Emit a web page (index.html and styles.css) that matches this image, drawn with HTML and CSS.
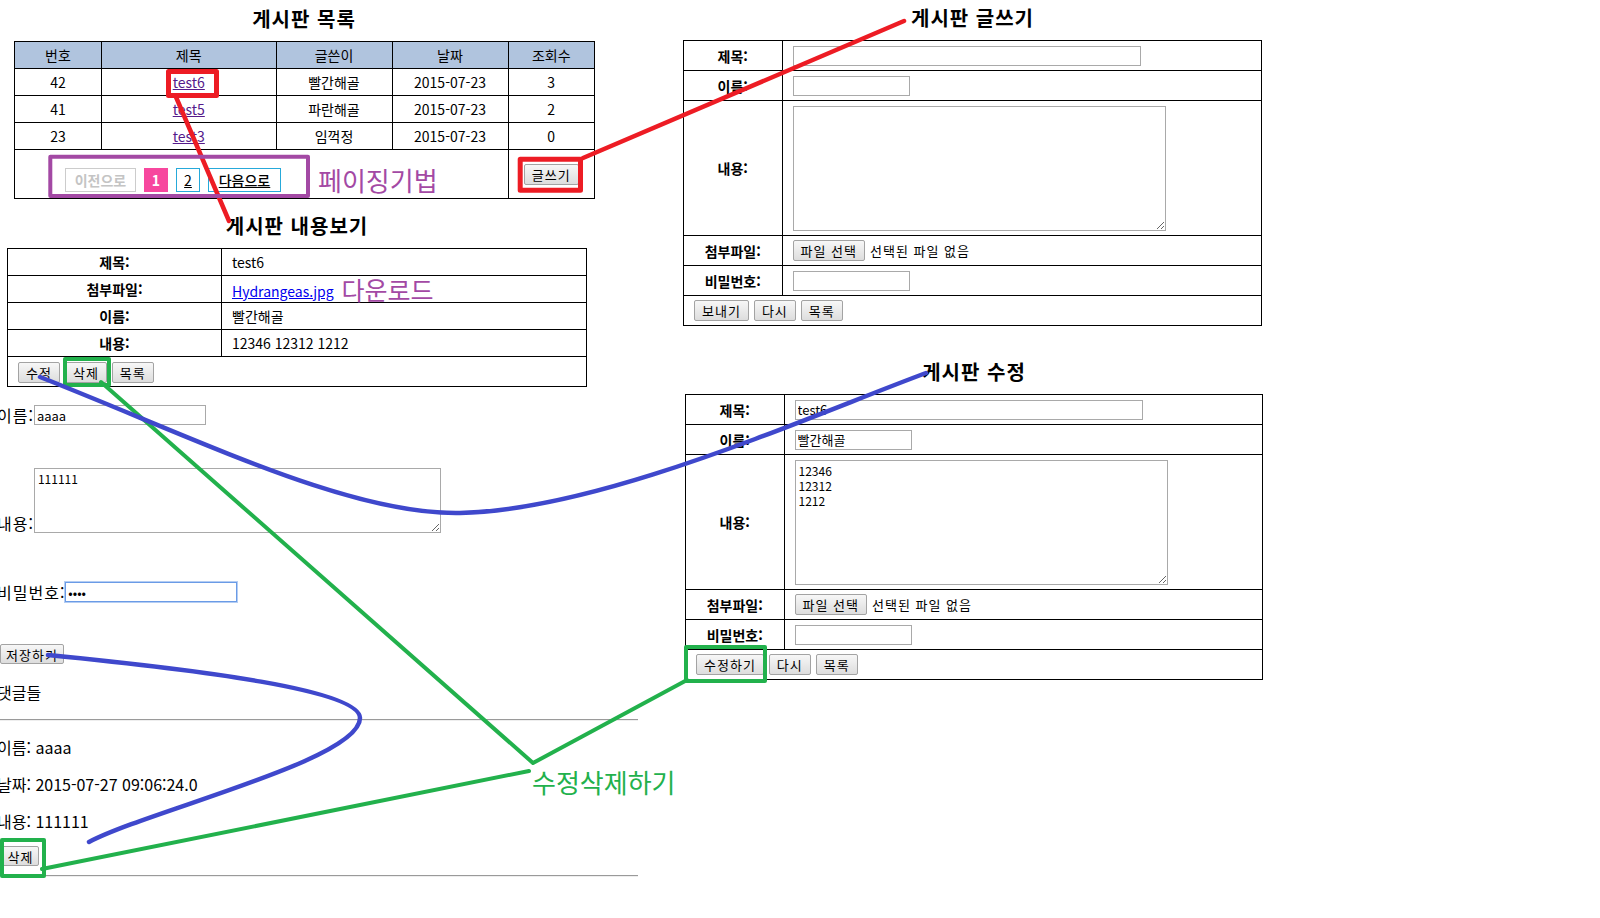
FILE: index.html
```html
<!DOCTYPE html>
<html lang="ko">
<head>
    <meta charset="UTF-8">
    <title>게시판 화면 정리</title>
    <link rel="stylesheet" href="styles.css">
</head>
<body>
<div class="canvas">

    <!-- 게시판 목록 -->
    <section class="panel panel-list">
        <h2 class="panel-title">게시판 목록</h2>
        <table class="board list">
            <colgroup>
                <col class="c-num"><col class="c-title"><col class="c-writer"><col class="c-date"><col class="c-hit">
            </colgroup>
            <tr><th>번호</th><th>제목</th><th>글쓴이</th><th>날짜</th><th>조회수</th></tr>
            <tr><td>42</td><td><a href="#" class="visited">test6</a></td><td>빨간해골</td><td>2015-07-23</td><td>3</td></tr>
            <tr><td>41</td><td><a href="#" class="visited">test5</a></td><td>파란해골</td><td>2015-07-23</td><td>2</td></tr>
            <tr><td>23</td><td><a href="#" class="visited">test3</a></td><td>임꺽정</td><td>2015-07-23</td><td>0</td></tr>
            <tr class="paging-row">
                <td colspan="4" class="paging-cell">
                    <div class="paging">
                        <span class="page-box disabled">이전으로</span>
                        <span class="page-box current">1</span>
                        <a href="#" class="page-box num">2</a>
                        <a href="#" class="page-box next">다음으로</a>
                        <span class="note note-purple">페이징기법</span>
                    </div>
                </td>
                <td class="write-cell"><button class="btn">글쓰기</button></td>
            </tr>
        </table>
    </section>

    <!-- 게시판 내용보기 -->
    <section class="panel panel-view">
        <h2 class="panel-title">게시판 내용보기</h2>
        <table class="board form view">
            <colgroup><col class="c-view-label"><col></colgroup>
            <tr><th>제목:</th><td>test6</td></tr>
            <tr><th>첨부파일:</th><td><a href="#" class="file-link">Hydrangeas.jpg</a><span class="note note-purple inline-note">다운로드</span></td></tr>
            <tr><th>이름:</th><td>빨간해골</td></tr>
            <tr><th>내용:</th><td>12346 12312 1212</td></tr>
            <tr class="btn-row"><td colspan="2">
                <div class="btns"><button class="btn">수정</button><button class="btn">삭제</button><button class="btn">목록</button></div>
            </td></tr>
        </table>
    </section>

    <!-- 게시판 글쓰기 -->
    <section class="panel panel-write">
        <h2 class="panel-title">게시판 글쓰기</h2>
        <table class="board form edit">
            <colgroup><col class="c-edit-label"><col></colgroup>
            <tr><th>제목:</th><td><input type="text" class="in in-title"></td></tr>
            <tr><th>이름:</th><td><input type="text" class="in in-short"></td></tr>
            <tr class="tall-row"><th>내용:</th><td><textarea class="ta"></textarea></td></tr>
            <tr><th>첨부파일:</th><td><div class="file"><button class="btn">파일 선택</button><span>선택된 파일 없음</span></div></td></tr>
            <tr><th>비밀번호:</th><td><input type="password" class="in in-short"></td></tr>
            <tr class="btn-row"><td colspan="2">
                <div class="btns"><button class="btn">보내기</button><button class="btn">다시</button><button class="btn">목록</button></div>
            </td></tr>
        </table>
    </section>

    <!-- 게시판 수정 -->
    <section class="panel panel-modify">
        <h2 class="panel-title">게시판 수정</h2>
        <table class="board form edit">
            <colgroup><col class="c-edit-label"><col></colgroup>
            <tr><th>제목:</th><td><input type="text" class="in in-title" value="test6"></td></tr>
            <tr><th>이름:</th><td><input type="text" class="in in-short" value="빨간해골"></td></tr>
            <tr class="tall-row"><th>내용:</th><td><textarea class="ta">12346
12312
1212</textarea></td></tr>
            <tr><th>첨부파일:</th><td><div class="file"><button class="btn">파일 선택</button><span>선택된 파일 없음</span></div></td></tr>
            <tr><th>비밀번호:</th><td><input type="password" class="in in-short"></td></tr>
            <tr class="btn-row"><td colspan="2">
                <div class="btns"><button class="btn">수정하기</button><button class="btn">다시</button><button class="btn">목록</button></div>
            </td></tr>
        </table>
    </section>

    <!-- 댓글 -->
    <section class="panel panel-comment">
        <div class="c-line"><label>이름:</label><input type="text" class="in in-comment" value="aaaa"></div>
        <div class="c-line c-area"><label>내용:</label><textarea class="ta ta-comment">111111</textarea></div>
        <div class="c-line c-pass"><label>비밀번호:</label><input type="password" class="in in-comment focus" value="1111"></div>
        <div class="c-save"><button class="btn">저장하기</button></div>
        <p class="c-title">댓글들</p>
        <hr class="c-hr">
        <p class="c-item first">이름: aaaa</p>
        <p class="c-item">날짜: 2015-07-27 09:06:24.0</p>
        <p class="c-item">내용: 111111</p>
        <div class="c-del"><button class="btn">삭제</button></div>
        <hr class="c-hr c-hr-end">
    </section>

    <span class="note note-green">수정삭제하기</span>

    <!-- 주석 선 -->
    <svg class="marks" width="1600" height="918" viewBox="0 0 1600 918">
        <g fill="none" stroke-linecap="round" stroke-linejoin="round">
            <rect x="168.5" y="71.5" width="48" height="24" stroke="#ed1c24" stroke-width="5"/>
            <path d="M176 97 L229 221" stroke="#ed1c24" stroke-width="4.5"/>
            <rect x="520.2" y="159.2" width="60.3" height="31" stroke="#ed1c24" stroke-width="5"/>
            <path d="M583 158 L904 21" stroke="#ed1c24" stroke-width="4.5"/>

            <rect x="50.3" y="156.7" width="257.7" height="39.3" stroke="#a349a4" stroke-width="4"/>

            <rect x="65" y="359" width="44" height="26" stroke="#22b14c" stroke-width="4"/>
            <rect x="686" y="647" width="79" height="34" stroke="#22b14c" stroke-width="4"/>
            <rect x="2" y="840" width="42" height="36" stroke="#22b14c" stroke-width="4"/>
            <path d="M101 382 L533 763 L687 680" stroke="#22b14c" stroke-width="4"/>
            <path d="M529 771 L42 869" stroke="#22b14c" stroke-width="4"/>

            <path d="M40 377 C200 440 350 515 460 513 C600 510 800 420 926 373" stroke="#3f48cc" stroke-width="4.5"/>
            <path d="M48 655 C200 670 360 690 360 718 C360 760 150 810 89 842" stroke="#3f48cc" stroke-width="4.5"/>
        </g>
    </svg>
</div>
</body>
</html>
```

FILE: styles.css
```css
/* 기본 */
* {
    box-sizing: border-box;
}

body {
    margin: 0;
    background: #FFFFFF;
    color: #000000;
    font-family: "Noto Sans CJK KR", "Noto Sans", sans-serif;
    overflow: hidden;
}

.canvas {
    position: relative;
    width: 1600px;
    height: 918px;
}

/* 각 화면 캡처 위치 */
.panel {
    position: absolute;
}

.panel-list { left: 14px; top: 7px; width: 580px; }
.panel-view { left: 7px; top: 214px; width: 580px; }
.panel-write { left: 683px; top: 6px; width: 579px; }
.panel-modify { left: 685px; top: 360px; width: 578px; }
.panel-comment { left: -3px; top: 405px; width: 641px; font-size: 16px; }

.panel-title {
    margin: 0 0 10px;
    text-align: center;
    font-size: 20px;
    line-height: 24px;
    letter-spacing: 1px;
    font-weight: bold;
}

/* 표 */
.board {
    width: 100%;
    border-collapse: collapse;
    table-layout: fixed;
    font-size: 14px;
    line-height: 18px;
}

.board th,
.board td {
    border: 1px solid #000000;
    padding: 0 10px;
}

.list th {
    height: 27px;
    background: #B0C4DE;
    font-weight: normal;
}

.list td {
    height: 27px;
    text-align: center;
}

.c-num { width: 87px; }
.c-title { width: 174.5px; }
.c-writer { width: 116px; }
.c-date { width: 116px; }
.c-hit { width: 86.5px; }

a.visited {
    color: #551A8B;
}

.list .paging-row td {
    height: 49px;
}

.list td.paging-cell {
    vertical-align: top;
    padding: 18px 0 0 50px;
    text-align: left;
}

.paging {
    display: flex;
    align-items: center;
    gap: 8px;
}

.page-box {
    display: inline-flex;
    align-items: center;
    justify-content: center;
    height: 24px;
    font-weight: bold;
    color: #000000;
}

.page-box.disabled {
    width: 71px;
    border: 1px solid #CCCCCC;
    color: #C4C4C4;
}

.page-box.current {
    width: 24px;
    background: #F7479E;
    color: #FFFFFF;
}

.page-box.num {
    width: 24px;
    border: 1px solid #26A9DA;
    text-decoration: underline;
    font-weight: normal;
}

.page-box.next {
    width: 73px;
    border: 1px solid #26A9DA;
    text-decoration: underline;
    font-weight: 500;
}

/* 설명 글씨 */
.note {
    font-size: 26px;
    line-height: 24px;
}

.note-purple {
    color: #A349A4;
    margin-left: 29px;
}

.inline-note {
    display: inline-block;
    margin-left: 8px;
    line-height: 14px;
    font-size: 25px;
    position: relative;
    top: 3px;
}

.note-green {
    position: absolute;
    left: 532px;
    top: 770px;
    color: #22B14C;
}

.write-cell {
    text-align: center;
}

/* 입력 폼 표 */
.form th {
    font-weight: bold;
    text-align: center;
}

.view th,
.view td {
    height: 27px;
}

.c-view-label { width: 214px; }
.c-edit-label { width: 98.5px; }

.edit th,
.edit td {
    height: 30px;
}

.edit .tall-row th,
.edit .tall-row td {
    height: 135px;
}

.form .btn-row td {
    height: 30px;
    padding: 0 10px;
}

.btns {
    display: flex;
    gap: 5px;
}

.view .btn-row td {
    padding-top: 1px;
}

.file {
    display: flex;
    align-items: center;
    gap: 5px;
    font-size: 13px;
    letter-spacing: 1px;
}

/* 입력 요소 */
.in {
    height: 20px;
    border: 1px solid #A9A9A9;
    padding: 0 2px;
    font-family: "Noto Sans CJK KR", sans-serif;
    font-size: 13px;
    vertical-align: middle;
    display: block;
}

.in-title { width: 348px; }
.in-short { width: 117px; }

.ta {
    display: block;
    width: 373px;
    height: 125px;
    border: 1px solid #A9A9A9;
    padding: 2px 3px;
    font-family: "Noto Sans CJK KR", sans-serif;
    font-size: 12px;
    line-height: 15px;
    resize: both;
}

.btn {
    height: 21px;
    padding: 0 7px;
    border: 1px solid #A3A3A3;
    border-radius: 2px;
    background: linear-gradient(#F7F7F7, #DDDDDD);
    font-family: "Noto Sans CJK KR", sans-serif;
    font-size: 13px;
    line-height: 19px;
    letter-spacing: 1px;
    color: #000000;
}

/* 댓글 영역 */
.c-line {
    display: flex;
    align-items: center;
    line-height: 20px;
}

.c-line label {
    white-space: nowrap;
    letter-spacing: 1px;
}

.in-comment {
    width: 172px;
    font-size: 13px;
}

.in-comment.focus {
    border: 1px solid #6A9BE6;
    box-shadow: 0 0 0 1px #B4CDF3;
}

.c-area {
    margin-top: 43px;
    align-items: flex-end;
}

.ta-comment {
    width: 407px;
    height: 65px;
}

.c-pass {
    margin-top: 49px;
}

.c-save {
    margin: 39px 0 0 3px;
}

.c-save .btn {
    width: 64px;
    height: 20px;
    padding: 0;
}

.c-title {
    margin: 17px 0 0;
    line-height: 20px;
}

.c-hr {
    margin: 17px 0 0;
    border: 0;
    border-top: 1px solid #9A9A9A;
    border-bottom: 1px solid #EEEEEE;
}

.c-item {
    margin: 17px 0 0;
    line-height: 20px;
}

.c-item.first {
    margin-top: 16px;
}

.c-del {
    margin: 12px 0 0 5px;
}

.c-del .btn {
    width: 37px;
    height: 20px;
    padding: 0;
}

.c-hr-end {
    margin-top: 8px;
}

/* 위에 그린 선 */
.marks {
    position: absolute;
    left: 0;
    top: 0;
    pointer-events: none;
}
```
